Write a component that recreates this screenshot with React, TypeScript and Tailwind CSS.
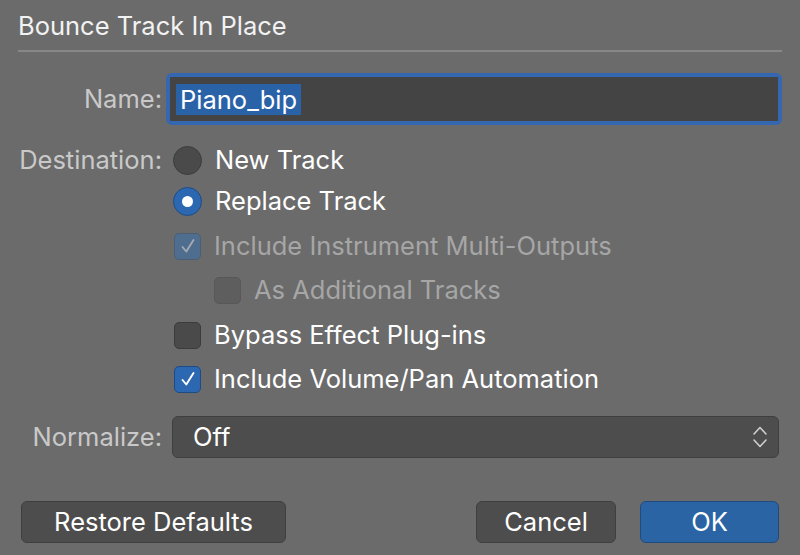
import React from "react";

const font = { fontFamily: 'Inter, "Liberation Sans", Arial, sans-serif' };

function Radio({ checked }: { checked?: boolean }) {
  return checked ? (
    <div className="w-[29px] h-[29px] rounded-full bg-[#2c67b1] border border-[#1f4b85] flex items-center justify-center">
      <div className="w-[11px] h-[11px] rounded-full bg-white" />
    </div>
  ) : (
    <div className="w-[29px] h-[29px] rounded-full bg-[#4a4a4a] border border-[#3c3c3c]" />
  );
}

function Check({ checked, disabled }: { checked?: boolean; disabled?: boolean }) {
  if (checked) {
    return (
      <div
        className={
          disabled
            ? "w-[27px] h-[27px] rounded-[5px] bg-[#4f6d8f] border border-[#4a5f77] flex items-center justify-center"
            : "w-[27px] h-[27px] rounded-[5px] bg-[#2c67b1] border border-[#1f4b85] flex items-center justify-center"
        }
      >
        <svg width="18" height="18" viewBox="0 0 18 18" fill="none">
          <path
            d="M3.5 10 L7.3 14.5 L14.5 3"
            stroke={disabled ? "#a3aab3" : "#ffffff"}
            strokeWidth="1.9"
            strokeLinecap="round"
            strokeLinejoin="round"
          />
        </svg>
      </div>
    );
  }
  return (
    <div
      className={
        disabled
          ? "w-[27px] h-[27px] rounded-[5px] bg-[#5e5e5e] border border-[#585858]"
          : "w-[27px] h-[27px] rounded-[5px] bg-[#4a4a4a] border border-[#3c3c3c]"
      }
    />
  );
}

function Row({
  label,
  children,
  className,
}: {
  label?: string;
  children: React.ReactNode;
  className?: string;
}) {
  return (
    <div className={"flex items-center " + (className || "")}>
      <div className="w-[144px] shrink-0 text-right text-[25.5px] text-[#c9c9c9] whitespace-nowrap">
        {label}
      </div>
      <div className="flex-1 flex items-center">{children}</div>
    </div>
  );
}

export default function App() {
  return (
    <div
      className="w-[800px] h-[555px] bg-[#6b6b6b] text-white px-[18px] overflow-hidden"
      style={font}
    >
      <div className="pt-[11px] pb-[10px] border-b-2 border-[#878787] text-[25.5px] leading-[29px] text-[#f2f2f2]">
        Bounce Track In Place
      </div>

      <Row label="Name:" className="mt-[21px] h-[52px]">
        <div className="ml-[4px] flex-1 h-[52px] rounded-[6px] bg-[#3566b0] p-[4px]">
          <div className="h-full bg-[#444444] flex items-center pl-[6px]">
            <span className="bg-[#2a62a8] text-white text-[25.5px] leading-[31px] px-[4px]">
              Piano_bip
            </span>
          </div>
        </div>
      </Row>

      <Row label="Destination:" className="mt-[20px] h-[30px]">
        <div className="ml-[11px] flex items-center gap-[13px]">
          <Radio />
          <span className="text-[25.5px] text-white">New Track</span>
        </div>
      </Row>
      <Row className="mt-[11px] h-[30px]">
        <div className="ml-[11px] flex items-center gap-[13px]">
          <Radio checked />
          <span className="text-[25.5px] text-white">Replace Track</span>
        </div>
      </Row>
      <Row className="mt-[15px] h-[30px]">
        <div className="ml-[12px] flex items-center gap-[13px]">
          <Check checked disabled />
          <span className="text-[25.5px] text-[#a6a6a6]">
            Include Instrument Multi-Outputs
          </span>
        </div>
      </Row>
      <Row className="mt-[14px] h-[30px]">
        <div className="ml-[52px] flex items-center gap-[13px]">
          <Check disabled />
          <span className="text-[25.5px] text-[#a6a6a6]">As Additional Tracks</span>
        </div>
      </Row>
      <Row className="mt-[15px] h-[30px]">
        <div className="ml-[12px] flex items-center gap-[13px]">
          <Check />
          <span className="text-[25.5px] text-white">Bypass Effect Plug-ins</span>
        </div>
      </Row>
      <Row className="mt-[14px] h-[30px]">
        <div className="ml-[12px] flex items-center gap-[13px]">
          <Check checked />
          <span className="text-[25.5px] text-white">
            Include Volume/Pan Automation
          </span>
        </div>
      </Row>

      <Row label="Normalize:" className="mt-[22px] h-[42px]">
        <div className="ml-[10px] mr-[3px] flex-1 h-[42px] rounded-[6px] bg-[#4d4d4d] border border-[#3f3f3f] flex items-center justify-between pl-[20px] pr-[10px]">
          <span className="text-[25.5px] text-white">Off</span>
          <svg width="16" height="24" viewBox="0 0 16 24" fill="none">
            <path
              d="M2 9 L8 2.5 L14 9"
              stroke="#d0d0d0"
              strokeWidth="1.6"
              strokeLinecap="round"
              strokeLinejoin="round"
            />
            <path
              d="M2 15 L8 21.5 L14 15"
              stroke="#d0d0d0"
              strokeWidth="1.6"
              strokeLinecap="round"
              strokeLinejoin="round"
            />
          </svg>
        </div>
      </Row>

      <div className="mt-[43px] mr-[3px] flex items-center">
        <button className="ml-[3px] w-[265px] h-[42px] rounded-[6px] bg-[#4d4d4d] border border-[#3f3f3f] text-[25.5px] text-white">
          Restore Defaults
        </button>
        <div className="flex-1" />
        <button className="w-[140px] h-[42px] rounded-[6px] bg-[#4d4d4d] border border-[#3f3f3f] text-[25.5px] text-white">
          Cancel
        </button>
        <button className="ml-[24px] w-[139px] h-[42px] rounded-[6px] bg-[#2a64a5] border border-[#1f4b80] text-[25.5px] text-white">
          OK
        </button>
      </div>
    </div>
  );
}
